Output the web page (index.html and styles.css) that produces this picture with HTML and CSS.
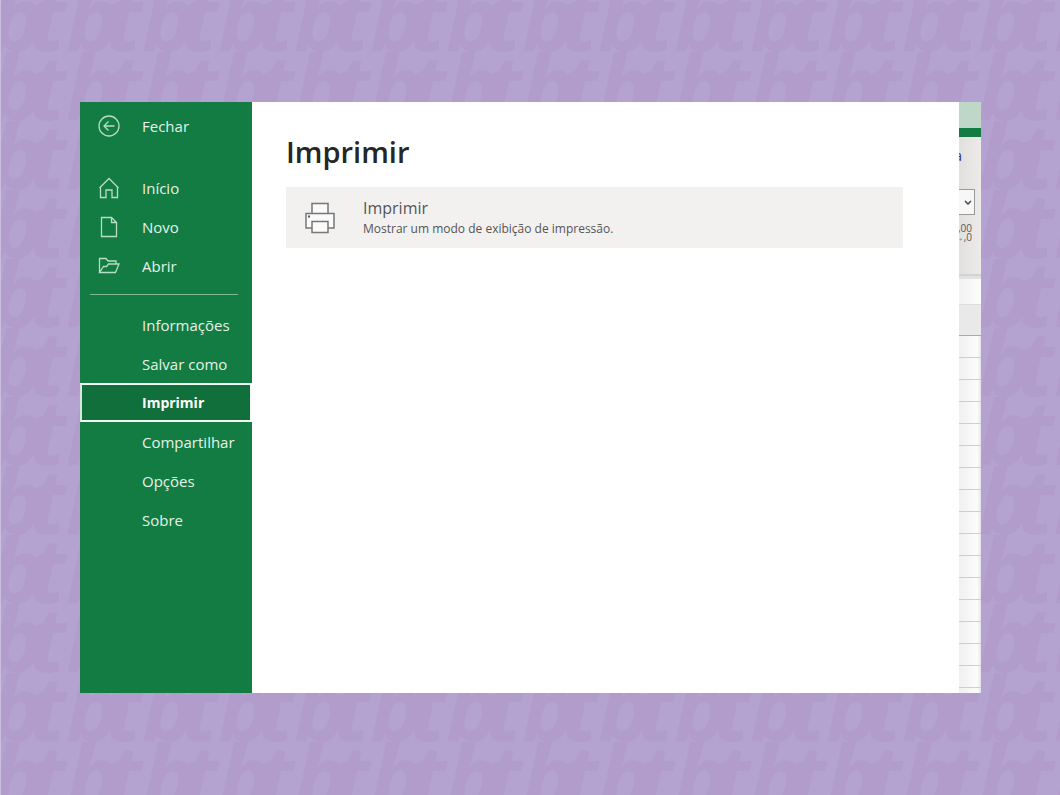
FILE: index.html
```html
<!DOCTYPE html>
<html lang="pt-BR">
<head>
<meta charset="utf-8">
<title>Imprimir</title>
<link rel="stylesheet" href="styles.css">
</head>
<body>
<svg class="backdrop" aria-hidden="true">
  <defs>
    <pattern id="tb" x="33" y="-17" width="76" height="69" patternUnits="userSpaceOnUse">
      <g class="mark">
        <text x="-5" y="68">t</text>
        <text x="71" y="68">t</text>
        <text x="32" y="68">b</text>
        <text x="-44" y="68">b</text>
      </g>
    </pattern>
  </defs>
  <rect width="100%" height="100%" fill="url(#tb)"/>
</svg>
<div class="window">
  <nav class="sidebar">
    <button class="item close"><svg class="icon" viewBox="0 0 22 22"><circle cx="11" cy="11" r="10"/><path d="M16.500 11H6M10.500 6.500 6 11l4.500 4.500"/></svg>Fechar</button>
    <button class="item"><svg class="icon" viewBox="0 0 22 22"><path d="M1.500 11 11 1.500 20.500 11M2.500 10.500V20.500h5.500v-7.500h6v7.500h5.500V10.500"/></svg>Início</button>
    <button class="item"><svg class="icon" viewBox="0 0 22 22"><path d="M3.500 1.500h10l5 5v14h-15zM13.500 1.500v5h5"/></svg>Novo</button>
    <button class="item"><svg class="icon" viewBox="0 0 22 22"><path d="M1.500 17.500V3.500h6.500l2 2.500h8v3M1.500 17.500l4-6h3l2-2.500h10.500l-3.500 8.500z"/></svg>Abrir</button>
    <hr class="divider">
    <button class="item text">Informações</button>
    <button class="item text">Salvar como</button>
    <button class="item text selected" aria-current="page">Imprimir</button>
    <button class="item text">Compartilhar</button>
    <button class="item text">Opções</button>
    <button class="item text">Sobre</button>
  </nav>
  <main class="content">
    <h1 class="title">Imprimir</h1>
    <button class="card">
      <svg class="printer" viewBox="0 0 30 32"><path d="M7 11V1.500h16V11M7 26H1V11.500h28V26h-6"/><path d="M7 19.500h16v11H7z"/><path class="dot" d="M3 13.500h2v2H3z"/></svg>
      <span class="card-text"><span class="card-title">Imprimir</span><span class="card-note">Mostrar um modo de exibição de impressão.</span></span>
    </button>
  </main>
  <aside class="sheet">
    <div class="titlebar"></div>
    <div class="tabs"></div>
    <div class="ribbon">
      <span class="tab-label">a</span>
      <div class="format"><select class="format-select" aria-label="Formato de número"><option></option></select><svg class="chevron" viewBox="0 0 8 6"><path d="M1 1l3 3 3-3"/></svg></div>
      <div class="decimals"><span>,00</span><span><b class="arrow">→</b>,0</span></div>
    </div>
    <div class="formula"></div>
    <div class="column-head"></div>
    <div class="cells"></div>
  </aside>
</div>
</body>
</html>
```
FILE: styles.css
```css
* { box-sizing: border-box; }
body {
  margin: 0;
  min-height: 100vh;
  display: flex;
  padding: 102px 79px 102px 80px;
  background: #b4a2d0;
  font-family: "Open Sans", "Noto Sans", sans-serif;
}
button { border: 0; margin: 0; font: inherit; text-align: left; }
.backdrop {
  position: fixed;
  inset: 0;
  width: 100%;
  height: 100%;
  z-index: -1;
  border-left: 1px solid #cabddf;
}
.mark {
  fill: #b19ccc;
  font: italic 700 90px "Open Sans", sans-serif;
}
.window { flex: 1; display: flex; background: #fff; min-width: 0; }
.sidebar {
  width: 172px;
  flex: none;
  display: flex;
  flex-direction: column;
  padding-top: 4px;
  background: #127c43;
}
.item {
  display: flex;
  align-items: center;
  gap: 22px;
  height: 39px;
  padding: 0 0 0 18px;
  background: transparent;
  color: #e6f2e8;
  font-size: 15px;
}
.close { margin-bottom: 23px; }
.text { padding-left: 62px; }
.icon {
  width: 22px;
  height: 22px;
  flex: none;
  fill: none;
  stroke: #b9dcc4;
  stroke-width: 1.3;
}
.divider {
  width: 148px;
  height: 1px;
  margin: 9px 0 10px 10px;
  border: 0;
  background: #7db993;
}
.selected {
  padding-left: 60px;
  border: 2px solid #f4faf5;
  border-left-color: #d5eadb;
  background: #106f3b;
  color: #fff;
  font-weight: 700;
  font-size: 14px;
}
.content { flex: 1; min-width: 0; padding: 28px 56px 0 34px; }
.title {
  margin: 0 0 13px;
  font-size: 29px;
  line-height: 44px;
  font-weight: 600;
  color: #262626;
}
.card {
  display: flex;
  align-items: center;
  gap: 28px;
  width: 100%;
  height: 61px;
  padding: 0 19px;
  background: #f2f1f0;
  color: #555;
}
.printer {
  width: 30px;
  height: 32px;
  flex: none;
  fill: #fafafa;
  stroke: #777;
  stroke-width: 1.5;
}
.dot { fill: #555; stroke: none; }
.card-text { display: flex; flex-direction: column; }
.card-title { font-size: 16px; line-height: 22px; }
.card-note { font-size: 12px; line-height: 20px; }
.sheet {
  width: 22px;
  flex: none;
  display: flex;
  flex-direction: column;
  overflow: hidden;
  background: #f8f8f8;
}
.titlebar { height: 26px; background: #bfd7c9; }
.tabs { height: 9px; background: #127c43; }
.ribbon {
  height: 139px;
  padding-top: 9px;
  background: linear-gradient(90deg, #e2e0df, #edebea);
  border-bottom: 2px solid #d4d3d2;
}
.tab-label {
  display: flex;
  justify-content: flex-end;
  width: 3px;
  height: 20px;
  overflow: hidden;
  font-size: 14px;
  line-height: 20px;
  color: #2c3d66;
}
.format {
  display: flex;
  position: relative;
  width: 16px;
  height: 26px;
  margin-top: 23px;
}
.format-select {
  appearance: none;
  width: 100%;
  border: 1px solid #999;
  border-left: 0;
  border-radius: 0;
  background: #f7f7f7;
}
.chevron {
  position: absolute;
  right: 3px;
  top: 11px;
  width: 8px;
  height: 6px;
  fill: none;
  stroke: #444;
  stroke-width: 1.5;
}
.decimals {
  display: flex;
  flex-direction: column;
  align-items: flex-end;
  width: 13px;
  margin-top: 9px;
  font-size: 10px;
  line-height: 9px;
  color: #555;
  white-space: nowrap;
}
.arrow { color: #2589c4; }
.formula { height: 28px; background: linear-gradient(90deg, #f2f2f2, #fcfcfc); border-top: 3px solid #e2e2e2; }
.column-head {
  height: 32px;
  background: #e9e9e9;
  border-top: 1px solid #ddd;
  border-bottom: 1px solid #aaa;
}
.cells {
  flex: 1;
  background:
    repeating-linear-gradient(transparent 0 21px, #cfcfcf 21px 22px),
    linear-gradient(90deg, #f0f0f0, #fcfcfc 85%, #e2e2e2);
}
```
